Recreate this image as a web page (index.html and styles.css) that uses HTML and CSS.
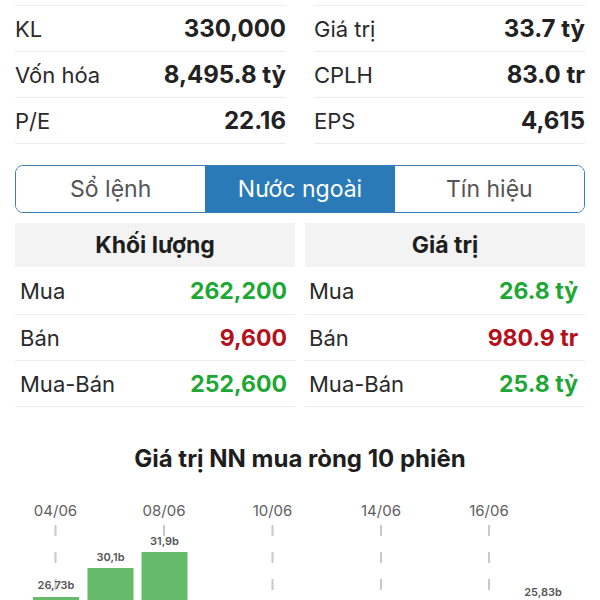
FILE: index.html
```html
<!DOCTYPE html>
<html lang="vi">
<head>
  <meta charset="UTF-8">
  <title>Cổ phiếu - Nước ngoài</title>
  <link rel="stylesheet" href="styles.css">
</head>
<body>

  <!-- Chỉ số cơ bản -->
  <div class="stats">
    <div class="stats-col">
      <div class="stat-row"><span class="stat-label">KL</span><span class="stat-value">330,000</span></div>
      <div class="stat-row"><span class="stat-label">Vốn hóa</span><span class="stat-value">8,495.8 tỷ</span></div>
      <div class="stat-row"><span class="stat-label">P/E</span><span class="stat-value">22.16</span></div>
    </div>
    <div class="stats-col">
      <div class="stat-row"><span class="stat-label">Giá trị</span><span class="stat-value">33.7 tỷ</span></div>
      <div class="stat-row"><span class="stat-label">CPLH</span><span class="stat-value">83.0 tr</span></div>
      <div class="stat-row"><span class="stat-label">EPS</span><span class="stat-value">4,615</span></div>
    </div>
  </div>

  <div class="segmented">
    <button class="segment">Sổ lệnh</button>
    <button class="segment active">Nước ngoài</button>
    <button class="segment">Tín hiệu</button>
  </div>

  <!-- Giao dịch khối ngoại -->
  <div class="foreign">
    <div class="foreign-col left">
      <div class="foreign-head">Khối lượng</div>
      <div class="foreign-row"><span>Mua</span><span class="num up">262,200</span></div>
      <div class="foreign-row"><span>Bán</span><span class="num down">9,600</span></div>
      <div class="foreign-row"><span>Mua-Bán</span><span class="num up">252,600</span></div>
    </div>
    <div class="foreign-col right">
      <div class="foreign-head">Giá trị</div>
      <div class="foreign-row"><span>Mua</span><span class="num up">26.8 tỷ</span></div>
      <div class="foreign-row"><span>Bán</span><span class="num down">980.9 tr</span></div>
      <div class="foreign-row"><span>Mua-Bán</span><span class="num up">25.8 tỷ</span></div>
    </div>
  </div>

  <h2 class="chart-title">Giá trị NN mua ròng 10 phiên</h2>

  <svg class="chart" width="600" height="130" viewBox="0 0 600 130">
    <!-- đường lưới -->
    <g class="grid">
      <line x1="55.5" y1="35" x2="55.5" y2="130"/>
      <line x1="164" y1="35" x2="164" y2="130"/>
      <line x1="272.5" y1="35" x2="272.5" y2="130"/>
      <line x1="381" y1="35" x2="381" y2="130"/>
      <line x1="489" y1="35" x2="489" y2="130"/>
    </g>
    <g class="dates">
      <text x="55.5" y="26">04/06</text>
      <text x="164" y="26">08/06</text>
      <text x="272.5" y="26">10/06</text>
      <text x="381" y="26">14/06</text>
      <text x="489" y="26">16/06</text>
    </g>
    <!-- cột -->
    <g class="bars">
      <rect x="33" y="107" width="46" height="40"/>
      <rect x="87.5" y="78" width="46" height="60"/>
      <rect x="141.5" y="62" width="46" height="80"/>
      <rect x="520" y="114" width="46" height="30"/>
    </g>
    <g class="values">
      <text x="56" y="99">26,73b</text>
      <text x="110.5" y="71">30,1b</text>
      <text x="164.5" y="55">31,9b</text>
      <text x="543" y="106">25,83b</text>
    </g>
  </svg>

</body>
</html>
```

FILE: styles.css
```css
* {
  box-sizing: border-box;
}

body {
  margin: 0;
  background-color: #fff;
  font-family: Inter, "Liberation Sans", Arial, sans-serif;
  color: #222;
  width: 600px;
  overflow: hidden;
}

/* Chỉ số cơ bản */
.stats {
  display: grid;
  grid-template-columns: 1fr 1fr;
  column-gap: 28px;
  padding: 0 15px;
  margin-top: 5px;
}

.stats-col {
  border-top: 1px solid #ececec;
}

.stat-row {
  display: flex;
  justify-content: space-between;
  align-items: center;
  height: 46px;
  border-bottom: 1px solid #ececec;
}

.stat-label {
  font-size: 22px;
  color: #2a2a2a;
}

.stat-value {
  font-size: 24px;
  font-weight: 700;
  color: #222;
}

/* Segmented control */
.segmented {
  display: grid;
  grid-template-columns: 1fr 1fr 1fr;
  margin: 21px 15px 0;
  height: 48px;
  border: 1.5px solid #3a7fb6;
  border-radius: 8px;
  overflow: hidden;
}

.segment {
  border: none;
  background: #fff;
  font-family: inherit;
  font-size: 23px;
  color: #555;
  padding: 0;
}

.segment.active {
  background-color: #2a7ab8;
  color: #fff;
}

/* Khối ngoại */
.foreign {
  display: grid;
  grid-template-columns: 1fr 1fr;
  column-gap: 10px;
  padding: 0 15px;
  margin-top: 10px;
}

.foreign-head {
  height: 44px;
  display: flex;
  align-items: center;
  justify-content: center;
  background-color: #f3f3f3;
  font-size: 23px;
  font-weight: 700;
  color: #1e1e1e;
}

.foreign-row {
  display: flex;
  justify-content: space-between;
  align-items: center;
  height: 46px;
  border-bottom: 1px solid #ececec;
  font-size: 22px;
  color: #2a2a2a;
}

.foreign-col.left .foreign-row {
  padding: 0 8px 0 5px;
}

.foreign-col.right .foreign-row {
  padding: 0 7px 0 4px;
}

.foreign-head + .foreign-row {
  height: 48px;
}

.num {
  font-size: 23px;
  font-weight: 700;
}

.up {
  color: #1fa736;
}

.down {
  color: #b3101c;
}

/* Biểu đồ */
.chart-title {
  margin: 38px 0 0;
  text-align: center;
  font-size: 24px;
  line-height: 28px;
  font-weight: 700;
  color: #1e1e1e;
}

.chart {
  display: block;
  margin-top: 17px;
}

.chart .grid line {
  stroke: #c9c9c9;
  stroke-width: 2;
  stroke-dasharray: 11 16;
}

.chart .dates text {
  font-family: Inter, "Liberation Sans", sans-serif;
  font-size: 15px;
  fill: #606060;
  text-anchor: middle;
}

.chart .bars rect {
  fill: #66bb6a;
}

.chart .values text {
  font-family: Inter, "Liberation Sans", sans-serif;
  font-size: 11px;
  font-weight: 600;
  fill: #555;
  text-anchor: middle;
}
```
